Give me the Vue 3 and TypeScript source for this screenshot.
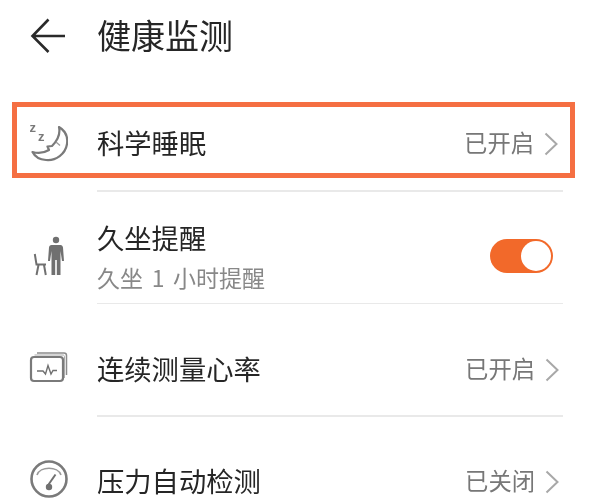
<script setup lang="ts">
const title = '健康监测'
</script>

<template>
  <main class="page">
    <header class="header">
      <svg class="back" viewBox="28 14 40 44" width="40" height="44" aria-hidden="true">
        <path d="M65 36H33.500M48.500 19.500 32.500 36 48.500 52" fill="none" stroke="#2a2a2a" stroke-width="2.600" />
      </svg>
      <h1 class="title">{{ title }}</h1>
    </header>

    <section class="highlight">
      <svg class="icon" viewBox="28 120 40 44" width="40" height="44" aria-hidden="true">
        <path d="M59 127C65 130.500 68 137 67 144C65.500 154 56 161 46 160C40 159.500 35 157 32.500 152C38 153.500 44 153 49 150L47.500 146.500L52 146C56 142 61 136 59 127Z" fill="none" stroke="#7a7a7a" stroke-width="2.200" stroke-linejoin="round" />
        <path d="M56 142 60 145.500" fill="none" stroke="#999" stroke-width="1.300" />
        <text class="zz" x="29.500" y="131.500">z</text>
        <text class="zz" x="38" y="140.500">z</text>
      </svg>
      <span class="label">科学睡眠</span>
      <span class="value">已开启</span>
      <svg class="chevron" viewBox="0 0 14 24" width="14" height="24" aria-hidden="true">
        <path d="M1.500 1.500 12.500 12 1.500 22.500" fill="none" stroke="#a8a8a8" stroke-width="2" />
      </svg>
    </section>

    <div class="rule first"></div>

    <section class="row sitting">
      <svg class="icon" viewBox="28 234 40 44" width="40" height="44" aria-hidden="true">
        <circle cx="56" cy="240" r="3.200" fill="#707070" />
        <path d="M51.500 245H60.500C62 245 62.700 246 63 247.500L64 261H62L60.500 251V275H56.800V260H55.200V275H51.500V251L50 261H48L49 247.500C49.200 246 50 245 51.500 245Z" fill="#707070" />
        <path d="M34.800 254 36.500 264.500H46M38.500 265 36.500 275M44 265 45.800 275" fill="none" stroke="#707070" stroke-width="2" />
      </svg>
      <div class="text">
        <span class="label">久坐提醒</span>
        <span class="sub">久坐 1 小时提醒</span>
      </div>
      <span class="switch"><span class="knob"></span></span>
    </section>

    <div class="rule"></div>

    <section class="row monitor">
      <svg class="icon" viewBox="28 348 40 44" width="40" height="44" aria-hidden="true">
        <rect x="31" y="359" width="32" height="24" rx="3" fill="none" stroke="#7a7a7a" stroke-width="2.200" />
        <path d="M37 355H64C65.500 355 66.500 356 66.500 357.500V377" fill="none" stroke="#8c8c8c" stroke-width="1.500" />
        <path d="M34.500 357H63C64 357 64.500 358 64.500 359V380" fill="none" stroke="#aaa" stroke-width="1" />
        <path d="M37 373H43L45.500 376 48 367.500 51 376 53 372.500H57" fill="none" stroke="#707070" stroke-width="1.400" />
      </svg>
      <span class="label">连续测量心率</span>
      <span class="value">已开启</span>
      <svg class="chevron" viewBox="0 0 14 24" width="14" height="24" aria-hidden="true">
        <path d="M1.500 1.500 12.500 12 1.500 22.500" fill="none" stroke="#a8a8a8" stroke-width="2" />
      </svg>
    </section>

    <div class="rule"></div>

    <section class="row pressure">
      <svg class="icon" viewBox="28 460 40 44" width="40" height="44" aria-hidden="true">
        <circle cx="49" cy="481" r="17.500" fill="none" stroke="#7a7a7a" stroke-width="2.600" />
        <path d="M37 477C40 468 58 468 61 477" fill="none" stroke="#999" stroke-width="1.600" />
        <path d="M47.500 488 55.500 476.500" fill="none" stroke="#707070" stroke-width="2" />
        <circle cx="49" cy="489" r="3.200" fill="#707070" />
      </svg>
      <span class="label">压力自动检测</span>
      <span class="value">已关闭</span>
      <svg class="chevron" viewBox="0 0 14 24" width="14" height="24" aria-hidden="true">
        <path d="M1.500 1.500 12.500 12 1.500 22.500" fill="none" stroke="#a8a8a8" stroke-width="2" />
      </svg>
    </section>
  </main>
</template>

<style>
html,
body {
  margin: 0;
  background: #fff;
}
</style>

<style scoped>
.page {
  width: 589px;
  height: 500px;
  overflow: hidden;
  display: flex;
  flex-direction: column;
  font-family: "Noto Sans CJK SC", "Noto Sans", sans-serif;
  color: #262626;
  filter: blur(0.35px);
}

.header {
  height: 72px;
  flex: none;
  display: flex;
  align-items: center;
  gap: 29px;
  padding-left: 28px;
}

.title {
  margin: 0 0 2px;
  font-size: 34px;
  font-weight: 400;
  line-height: 1;
}

.highlight,
.row {
  display: flex;
  align-items: center;
  flex: none;
  box-sizing: border-box;
}

.highlight {
  height: 76px;
  width: 563px;
  margin: 30px 0 0 12px;
  padding: 4px 12px 0 11px;
  border: 5px solid #f56f42;
}

.row {
  padding: 17px 30px 0 28px;
}

.icon {
  flex: none;
  margin-right: 29px;
}

.zz {
  font-family: "Liberation Sans", sans-serif;
  font-size: 13px;
  font-weight: 700;
  fill: #7a7a7a;
}

.label {
  font-size: 27.300px;
  line-height: 32px;
}

.value {
  margin-left: auto;
  font-size: 23.300px;
  color: #777;
}

.chevron {
  flex: none;
  margin: 4px 0 0 10px;
}

.rule {
  flex: none;
  height: 1.500px;
  margin: 0 26px 0 97px;
  background: #e9e9e9;
}

.rule.first {
  margin-top: 12px;
}

.sitting {
  height: 111px;
  padding-top: 18px;
  padding-right: 36px;
}

.monitor {
  height: 111px;
}

.pressure {
  height: 83px;
  padding-top: 43px;
}

.text {
  display: flex;
  flex-direction: column;
  gap: 10px;
  margin-bottom: 1px;
}

.sub {
  font-size: 23px;
  line-height: 28px;
  word-spacing: 3.500px;
  color: #888;
}

.switch {
  margin-left: auto;
  width: 63px;
  height: 34px;
  box-sizing: border-box;
  padding: 2px;
  border-radius: 17px;
  background: #f2692a;
  display: flex;
  justify-content: flex-end;
}

.knob {
  width: 30px;
  height: 30px;
  border-radius: 50%;
  background: #fff;
}
</style>
